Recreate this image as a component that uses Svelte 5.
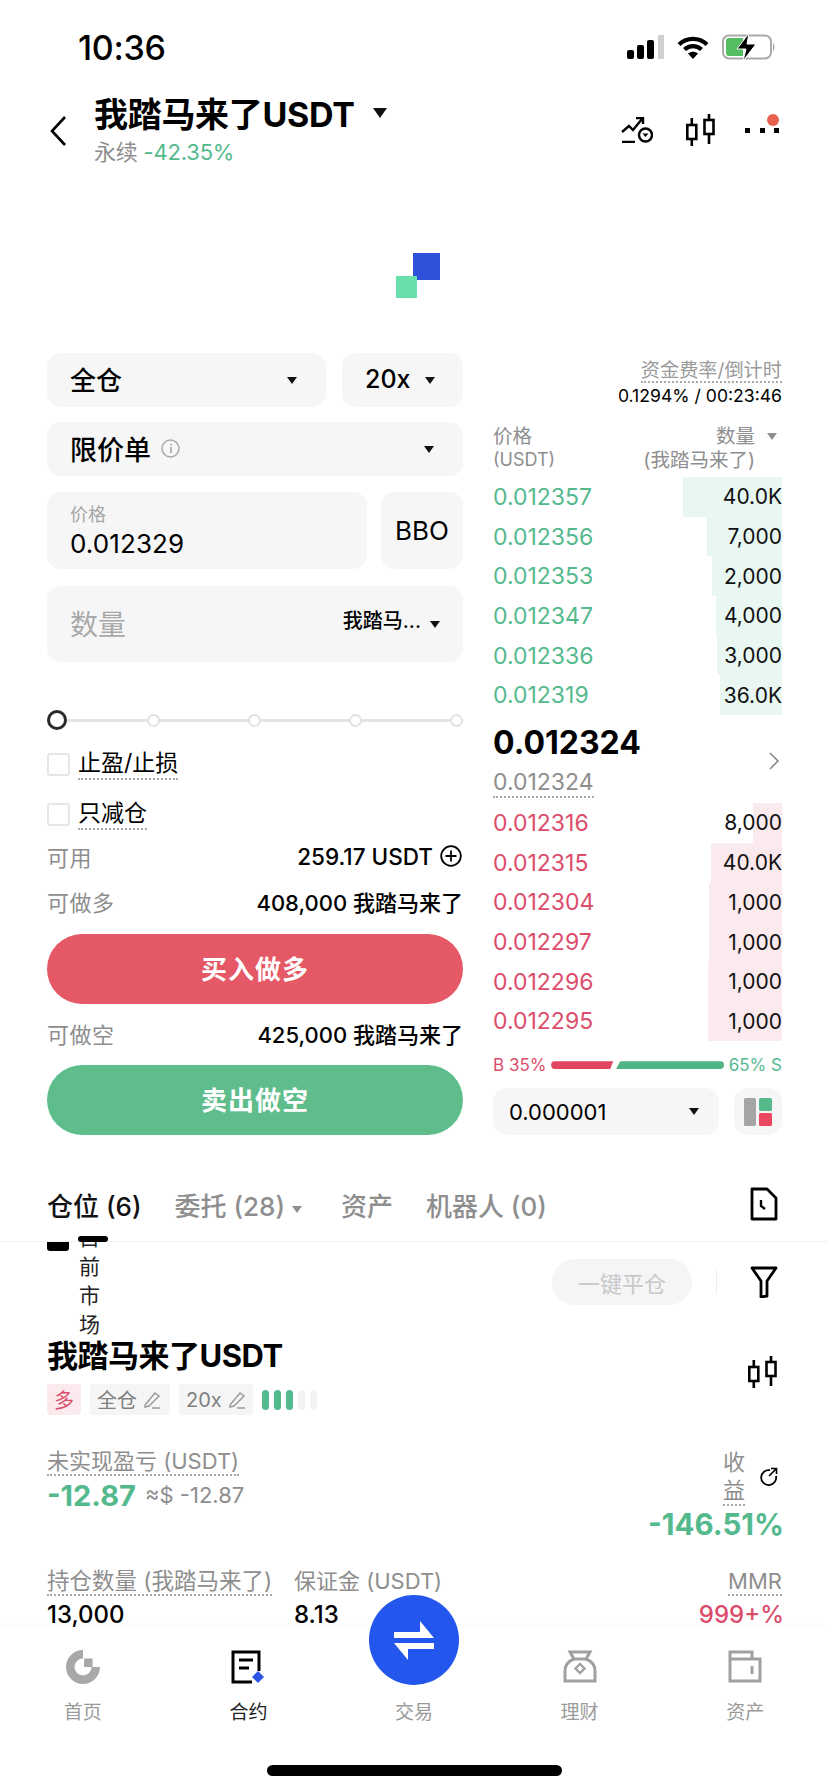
<script>
  const bids = [
    ['0.012357', '40.0K', 99], ['0.012356', '7,000', 75], ['0.012353', '2,000', 70],
    ['0.012347', '4,000', 66], ['0.012336', '3,000', 65], ['0.012319', '36.0K', 62]
  ];
  const asks = [
    ['0.012316', '8,000', 29], ['0.012315', '40.0K', 71], ['0.012304', '1,000', 73],
    ['0.012297', '1,000', 73], ['0.012296', '1,000', 74], ['0.012295', '1,000', 74]
  ];
</script>

<div class="page">
  <div class="main">
    <div class="status">
      <span class="time">10:36</span>
      <div class="status-icons">
        <svg width="37" height="24" viewBox="0 0 37 24"><rect x="0" y="15" width="7" height="9" rx="2" fill="#000"/><rect x="10" y="10" width="7" height="14" rx="2" fill="#000"/><rect x="20" y="5" width="7" height="19" rx="2" fill="#000"/><rect x="31" y="0" width="6" height="24" fill="#d0d0d0"/></svg>
        <svg width="32" height="23" viewBox="0 0 32 23"><path d="M2 8.500C10 1 22 1 30 8.500M7.500 13.500C12.500 9 19.500 9 24.500 13.500" fill="none" stroke="#000" stroke-width="4.200"/><path d="M11 17.500C14 15 18 15 21 17.500L16 23Z" fill="#000"/></svg>
        <svg width="54" height="28" viewBox="0 0 54 28"><rect x="1" y="2.500" width="48" height="23" rx="6" fill="none" stroke="#aaa" stroke-width="2"/><path d="M4 8a3 3 0 0 1 3-3h14v18H7a3 3 0 0 1-3-3Z" fill="#54bd62"/><path d="M27 0L15 16h9l-3 12L34 11h-9Z" fill="#000" stroke="#fff" stroke-width="1"/><path d="M51 10c2 1 2 7 0 8Z" fill="#aaa"/></svg>
      </div>
    </div>

    <div class="head">
      <svg class="back" width="17" height="32" viewBox="0 0 17 32"><path d="M15 2L2 16l13 14" fill="none" stroke="#000" stroke-width="2.600"/></svg>
      <div class="head-title">
        <div class="title-line"><span class="title">我踏马来了USDT</span><i class="tri tri-title"></i></div>
        <div class="sub"><span class="gray">永续</span> <span class="green">-42.35%</span></div>
      </div>
      <div class="head-icons">
        <svg class="ic-chart" width="32" height="26" viewBox="0 0 32 26"><path d="M1 25h13M1 15l7-6 4 4L21 2M15 1h7v6" fill="none" stroke="#000" stroke-width="2.400"/><circle cx="24.500" cy="18" r="6.500" fill="none" stroke="#000" stroke-width="2.400"/><path d="M21.500 16.500h6L24.500 20Z" fill="#000"/></svg>
        <svg width="29" height="32" viewBox="0 0 29 32"><g fill="none" stroke="#000" stroke-width="2.600"><rect x="1.300" y="11" width="9" height="14"/><rect x="18.500" y="6" width="9" height="14"/><path d="M5.800 4v7M5.800 25v7M23 0v6M23 20v10"/></g></svg>
        <div class="dots"><i></i><i></i><i></i><b></b></div>
      </div>
    </div>

    <div class="chart">
      <svg width="46" height="46" viewBox="0 0 46 46"><rect x="17" y="0" width="27" height="27" fill="#2f51db"/><rect x="0" y="23" width="21" height="22" fill="#68e0ab"/></svg>
    </div>

    <div class="trade">
      <div class="form">
        <div class="row-top">
          <div class="box box-margin"><span class="big">全仓</span><i class="tri"></i></div>
          <div class="box box-lev"><span class="big lev">20x</span><i class="tri"></i></div>
        </div>
        <div class="box box-type">
          <span class="big type-label">限价单 <svg width="19" height="19" viewBox="0 0 19 19"><circle cx="9.500" cy="9.500" r="8.500" fill="none" stroke="#aaa" stroke-width="1.500"/><path d="M10 8v6M10 5v1.500" stroke="#aaa" stroke-width="1.700"/></svg></span>
          <i class="tri"></i>
        </div>
        <div class="row-price">
          <div class="box box-price">
            <span class="field-label">价格</span>
            <span class="field-value">0.012329</span>
          </div>
          <div class="box box-bbo">BBO</div>
        </div>
        <div class="box box-qty">
          <span class="qty-ph">数量</span>
          <span class="qty-unit"><span class="qty-name">我踏马...</span><i class="tri"></i></span>
        </div>

        <div class="slider">
          <i class="knob"></i><i class="stop"></i><i class="stop"></i><i class="stop"></i><i class="stop"></i>
        </div>

        <label class="check first"><i class="cb"></i><span class="dotted">止盈/止损</span></label>
        <label class="check second"><i class="cb"></i><span class="dotted">只减仓</span></label>

        <div class="info info-avail"><span class="info-k">可用</span><span class="info-v usd">259.17 USDT <svg width="22" height="22" viewBox="0 0 22 22"><circle cx="11" cy="11" r="9.800" fill="none" stroke="#000" stroke-width="1.800"/><path d="M11 5.500v11M5.500 11h11" stroke="#000" stroke-width="1.800"/></svg></span></div>
        <div class="info info-long"><span class="info-k">可做多</span><span class="info-v">408,000 我踏马来了</span></div>
        <div class="btn buy">买入做多</div>
        <div class="info info-short"><span class="info-k">可做空</span><span class="info-v">425,000 我踏马来了</span></div>
        <div class="btn sell">卖出做空</div>
      </div>

      <div class="book">
        <div class="fund">
          <span class="fund-k dotted">资金费率/倒计时</span>
          <span class="fund-v">0.1294% / 00:23:46</span>
        </div>
        <div class="book-head">
          <div class="col-l"><span>价格</span><span class="latin">(USDT)</span></div>
          <div class="col-r"><span>数量</span><span>(我踏马来了)</span><i class="tri tri-gray"></i></div>
        </div>
        <div class="rows">
          {#each bids as r}
            <div class="lvl"><i class="bar bar-g" style="width:{r[2]}px"></i><span class="price green">{r[0]}</span><span class="qty">{r[1]}</span></div>
          {/each}
        </div>
        <div class="mid">
          <div class="mid-main"><div class="mid-price">0.012324</div><div class="mid-sub"><span class="dotted">0.012324</span></div></div>
          <svg width="12" height="20" viewBox="0 0 12 20"><path d="M2 2l8 8-8 8" fill="none" stroke="#888" stroke-width="1.600"/></svg>
        </div>
        <div class="rows">
          {#each asks as r}
            <div class="lvl"><i class="bar bar-r" style="width:{r[2]}px"></i><span class="price red">{r[0]}</span><span class="qty">{r[1]}</span></div>
          {/each}
        </div>
        <div class="ratio">
          <span class="red">B 35%</span>
          <i class="seg seg-r"></i><i class="seg seg-g"></i>
          <span class="green">65% S</span>
        </div>
        <div class="book-foot">
          <div class="box box-tick"><span>0.000001</span><i class="tri"></i></div>
          <div class="box box-layout">
            <svg width="28" height="28" viewBox="0 0 28 28"><rect x="0" y="0" width="12" height="28" rx="1.500" fill="#a5a5a5"/><rect x="15" y="0" width="13" height="13" rx="1.500" fill="#55b98a"/><rect x="15" y="15" width="13" height="13" rx="1.500" fill="#e8475f"/></svg>
          </div>
        </div>
      </div>
    </div>

    <div class="tabs">
      <span class="tab on">仓位 (6)</span>
      <span class="tab t2">委托 (28) <i class="tri tri-gray tri-inline"></i></span>
      <span class="tab t3">资产</span>
      <span class="tab t4">机器人 (0)</span>
      <svg class="tab-icon" width="28" height="34" viewBox="0 0 28 34"><path d="M2 2h15l9 9v21H2Z" fill="none" stroke="#000" stroke-width="2.800" stroke-linejoin="round"/><path d="M11 13v6l4 3" fill="none" stroke="#000" stroke-width="2.400"/></svg>
      <i class="black-pill"></i>
    </div>

    <div class="list">
      <div class="filter-row">
        <i class="black-cb"></i>
        <span class="vert">目前市场</span>
        <span class="pill">一键平仓</span>
        <i class="sep"></i>
        <svg width="28" height="32" viewBox="0 0 28 32"><path d="M2 2h24L17 15v15l-6 1V15Z" fill="none" stroke="#000" stroke-width="2.800" stroke-linejoin="round"/></svg>
      </div>

      <div class="pos-head">
        <div class="pos-left">
          <div class="pos-title">我踏马来了USDT</div>
          <div class="tags">
            <span class="tag tag-long">多</span>
            <span class="tag tag-cross">全仓 <svg width="18" height="18" viewBox="0 0 18 18"><path d="M2 14L12 2l4 3L6 15l-4 1ZM9 17h8" fill="none" stroke="#999" stroke-width="1.400"/></svg></span>
            <span class="tag">20x <svg width="18" height="18" viewBox="0 0 18 18"><path d="M2 14L12 2l4 3L6 15l-4 1ZM9 17h8" fill="none" stroke="#999" stroke-width="1.400"/></svg></span>
            <span class="lev-bars"><i class="lv on"></i><i class="lv on"></i><i class="lv on"></i><i class="lv"></i><i class="lv"></i></span>
          </div>
        </div>
        <svg class="pos-candle" width="29" height="32" viewBox="0 0 29 32"><g fill="none" stroke="#000" stroke-width="2.600"><rect x="1.300" y="11" width="9" height="14"/><rect x="18.500" y="6" width="9" height="14"/><path d="M5.800 4v7M5.800 25v7M23 0v6M23 20v10"/></g></svg>
      </div>

      <div class="metrics m1">
        <div>
          <div class="m-k"><span class="dotted">未实现盈亏 (USDT)</span></div>
          <div class="pnl"><span class="pnl-v green">-12.87</span> <span class="pnl-usd">≈$ -12.87</span></div>
        </div>
        <div class="m-right">
          <div class="roi-k"><span class="roi-text dotted">收益</span>
            <svg width="20" height="20" viewBox="0 0 20 20"><path d="M11 3.200A7.500 7.500 0 1 0 17 9" fill="none" stroke="#000" stroke-width="1.800"/><path d="M10 9l7-7M12 1.500h5.500V7" fill="none" stroke="#000" stroke-width="1.600"/></svg>
          </div>
          <div class="roi-v green">-146.51%</div>
        </div>
      </div>

      <div class="metrics m2">
        <div class="m-c1">
          <div class="m-k wide"><span class="dotted">持仓数量 (我踏马来了)</span></div>
          <div class="m-v">13,000</div>
        </div>
        <div class="m-c2">
          <div class="m-k">保证金 (USDT)</div>
          <div class="m-v">8.13</div>
        </div>
        <div class="m-right m-c3">
          <div class="m-k"><span class="dotted">MMR</span></div>
          <div class="m-v mmr red">999+%</div>
        </div>
      </div>
    </div>
  </div>

  <nav class="nav">
    <div class="nav-item">
      <svg width="34" height="34" viewBox="0 0 32 32"><path d="M16 0A16 16 0 1 0 32 16H24A8 8 0 1 1 16 8Z" fill="#a8a8a8"/><rect x="17" y="8" width="8" height="8" fill="#a8a8a8"/></svg>
      <span>首页</span>
    </div>
    <div class="nav-item active">
      <svg width="34" height="34" viewBox="0 0 34 34"><path d="M28 21V2H2v30h19" fill="none" stroke="#000" stroke-width="3"/><path d="M8 10h14M8 18h10" stroke="#000" stroke-width="3"/><path d="M27 21l6 6-6 6-6-6Z" fill="#2a55e5"/></svg>
      <span>合约</span>
    </div>
    <div class="nav-item trade-item">
      <div class="fab">
        <svg width="44" height="40" viewBox="0 0 44 40"><path d="M2 12h26V1l14 17H2ZM42 23H2l14 17V29h26Z" fill="#fff"/></svg>
      </div>
      <span>交易</span>
    </div>
    <div class="nav-item">
      <svg width="34" height="34" viewBox="0 0 34 34"><path d="M7 2h20l-4 7c5 2 9 6 9 12v10H2V21c0-6 4-10 9-12Z M11 9h12" fill="none" stroke="#a0a0a0" stroke-width="3"/><path d="M17 14l4.500 4.500L17 23l-4.500-4.500Z" fill="none" stroke="#a0a0a0" stroke-width="2.400"/></svg>
      <span>理财</span>
    </div>
    <div class="nav-item">
      <svg width="34" height="34" viewBox="0 0 34 34"><path d="M2 31V2h22v7h8v22ZM2 9h22" fill="none" stroke="#a0a0a0" stroke-width="3"/><path d="M24 16v8" stroke="#a0a0a0" stroke-width="3"/></svg>
      <span>资产</span>
    </div>
    <i class="home-bar"></i>
  </nav>
</div>

<style>
  :global(body) { margin: 0; background: #fff; }
  .page {
    width: 828px; height: 1792px; position: relative; overflow: hidden; background: #fff;
    display: flex; flex-direction: column;
    font-family: Inter, "Noto Sans CJK SC", sans-serif; color: #000;
  }
  .main { flex: 1; min-height: 0; overflow: hidden; }
  i { display: block; font-style: normal; }
  .green { color: #55b98e; }
  .red { color: #dc4d6c; }
  .gray { color: #8e8e8e; }
  .dotted { border-bottom: 2px dotted #aaa; }

  .tri { width: 0; height: 0; border-left: 5.500px solid transparent; border-right: 5.500px solid transparent; border-top: 7px solid #111; flex: none; }
  .tri-title { margin-left: 18px; border-left-width: 7px; border-right-width: 7px; border-top-width: 10px; }
  .tri-gray { border-top-color: #8e8e8e; }
  .tri-inline { display: inline-block; vertical-align: 3px; }

  .status { height: 94px; display: flex; align-items: center; justify-content: space-between; padding: 0 52px 0 78px; }
  .time { font-size: 34px; font-weight: 500; letter-spacing: -0.3px; }
  .status-icons { display: flex; align-items: center; gap: 13px; }

  .head { height: 80px; display: flex; align-items: center; padding: 0 49px 0 50px; }
  .back { margin-top: -6px; margin-right: 27px; flex: none; }
  .head-title { flex: 1; margin-top: -10px; }
  .title-line { display: flex; align-items: center; height: 42px; }
  .title { font-size: 34px; font-weight: 700; letter-spacing: -0.3px; }
  .sub { font-size: 22px; line-height: 30px; margin-top: 3px; letter-spacing: -0.2px; }
  .head-icons { display: flex; align-items: center; gap: 30px; margin-top: -8px; }
  .ic-chart { margin-right: 3px; }
  .dots { width: 34px; height: 32px; position: relative; display: flex; justify-content: space-between; align-items: center; }
  .dots i { width: 5px; height: 5px; background: #000; }
  .dots b { position: absolute; right: 0; top: 0; width: 12px; height: 12px; border-radius: 50%; background: #e8604f; }

  .chart { height: 179px; display: flex; align-items: center; padding-left: 396px; padding-top: 24px; box-sizing: border-box; }

  .trade { display: grid; grid-template-columns: 416px 289px; gap: 30px; padding-left: 47px; }
  .form { display: flex; flex-direction: column; }
  .box { background: #f6f6f6; border-radius: 14px; display: flex; align-items: center; box-sizing: border-box; }
  .big { font-size: 26px; font-weight: 500; margin-top: -3px; }
  .big.lev { font-size: 25px; }
  .row-top { display: flex; gap: 16px; }
  .box-margin { width: 279px; height: 54px; justify-content: space-between; padding: 0 29px 0 23px; }
  .box-lev { width: 121px; height: 54px; justify-content: space-between; padding: 0 28px 0 23px; }
  .box-type { height: 54px; margin-top: 15px; justify-content: space-between; padding: 0 29px 0 23px; }
  .type-label { display: flex; align-items: center; gap: 10px; font-size: 27px; margin-top: -1px; }
  .row-price { display: flex; gap: 14px; margin-top: 16px; }
  .box-price { width: 320px; height: 77px; flex-direction: column; align-items: flex-start; padding: 10px 23px 0; }
  .field-label { font-size: 18px; color: #a6a6a6; line-height: 26px; }
  .field-value { font-size: 26px; line-height: 32px; font-weight: 400; letter-spacing: 0.1px; }
  .box-bbo { width: 82px; height: 77px; justify-content: center; font-size: 26px; }
  .box-qty { height: 76px; margin-top: 17px; justify-content: space-between; padding: 0 23px 0 23px; }
  .qty-ph { font-size: 28px; color: #a9a9a9; margin-top: -2px; }
  .qty-unit { font-size: 20px; font-weight: 500; display: flex; align-items: center; gap: 9px; }
  .qty-name { margin-top: -9px; }

  .slider {
    height: 20px; margin-top: 48px; display: flex; justify-content: space-between; align-items: center;
    background: linear-gradient(#e4e4e4, #e4e4e4) center / 100% 3px no-repeat;
  }
  .knob { width: 20px; height: 20px; border-radius: 50%; background: #fff; border: 3px solid #2a2a2a; box-sizing: border-box; margin-right: -8px; }
  .stop { width: 13px; height: 13px; border-radius: 50%; background: #fff; border: 2px solid #e2e2e2; box-sizing: border-box; }

  .check { display: flex; align-items: center; gap: 8px; height: 30px; margin-top: 19px; font-size: 23px; }
  .check.second { margin-top: 20px; }
  .cb { width: 23px; height: 23px; border: 2px solid #e6e6e6; border-radius: 3px; box-sizing: border-box; }
  .check .dotted { line-height: 30px; }

  .info { display: flex; justify-content: space-between; align-items: center; height: 30px; }
  .info-avail { margin-top: 12px; }
  .info-long { margin-top: 15px; }
  .info-short { margin-top: 14px; }
  .info-k { font-size: 22px; color: #8e8e8e; letter-spacing: 0.5px; }
  .info-v { font-size: 22px; font-weight: 500; display: flex; align-items: center; gap: 7px; }
  .info-v.usd { font-size: 22.500px; }
  .info-v svg { margin-right: 1px; }

  .btn { height: 70px; border-radius: 35px; color: #fff; display: flex; align-items: center; justify-content: center; font-size: 26px; font-weight: 700; letter-spacing: 1px; box-sizing: border-box; padding-bottom: 3px; }
  .buy { background: #e55866; margin-top: 18px; }
  .sell { background: #5fbd8c; margin-top: 17px; }

  .book { display: flex; flex-direction: column; }
  .fund { display: flex; flex-direction: column; align-items: flex-end; margin-top: 6px; }
  .fund-k { font-size: 19.200px; line-height: 22px; color: #9a9a9a; }
  .fund-v { font-size: 17.600px; line-height: 24px; margin-top: 1px; }
  .book-head { display: flex; justify-content: space-between; margin-top: 16px; font-size: 19.500px; line-height: 24px; color: #8e8e8e; height: 53px; }
  .latin { font-size: 18px; }
  .col-l, .col-r { display: flex; flex-direction: column; }
  .col-r { align-items: flex-end; padding-right: 27px; position: relative; }
  .col-r .tri { position: absolute; right: 5px; top: 9px; }
  .rows { display: flex; flex-direction: column; }
  .lvl { height: 39.700px; position: relative; display: flex; justify-content: space-between; align-items: center; font-size: 21px; }
  .lvl span { position: relative; }
  .price { font-size: 23px; letter-spacing: 0; }
  .bar { position: absolute; right: 0; top: 0; bottom: 0; }
  .bar-g { background: #e8f7f1; }
  .bar-r { background: #fbeaed; }
  .qty { color: #111; }
  .mid { height: 88px; display: flex; justify-content: space-between; align-items: center; }
  .mid-price { font-size: 32px; font-weight: 700; line-height: 42px; margin-top: 0; }
  .mid-sub { font-size: 23px; color: #8e8e8e; line-height: 28px; margin-top: 4px; }
  .mid svg { margin-right: 2px; margin-top: 4px; }
  .ratio { display: flex; align-items: center; justify-content: space-between; height: 24px; margin-top: 12px; font-size: 17px; white-space: nowrap; }
  .seg { height: 8px; flex: none; }
  .seg-r { width: 62px; margin-left: 2px; background: #e1455f; border-radius: 4px 0 0 4px; clip-path: polygon(0 0, 100% 0, 95% 100%, 0 100%); }
  .seg-g { width: 108px; margin-right: 2px; background: #4fb585; border-radius: 0 4px 4px 0; clip-path: polygon(4% 0, 100% 0, 100% 100%, 0 100%); }
  .book-foot { display: flex; gap: 15px; margin-top: 11px; }
  .box-tick { width: 226px; height: 47px; justify-content: space-between; padding: 0 20px 0 16px; font-size: 22px; }
  .box-layout { width: 48px; height: 47px; justify-content: center; }

  .tabs { height: 107px; box-sizing: border-box; border-bottom: 1px solid #f2f2f2; display: flex; align-items: center; padding: 32px 50px 0 47px; font-size: 26px; color: #8e8e8e; position: relative; }
  .tab { white-space: nowrap; font-weight: 500; }
  .tab.on { color: #111; }
  .t2 { margin-left: 33px; }
  .t3 { margin-left: 39px; }
  .t4 { margin-left: 33px; }
  .tab-icon { margin-left: auto; }
  .black-pill { position: absolute; left: 78px; bottom: -1px; width: 30px; height: 6px; border-radius: 3px; background: #000; }

  .list { padding: 0 46px 0 47px; overflow: hidden; height: 387px; }
  .filter-row { height: 80px; display: flex; align-items: center; position: relative; }
  .black-cb { position: absolute; left: 0; top: 0; width: 22px; height: 9px; background: #000; border-radius: 0 0 3px 3px; }
  .vert { position: absolute; left: 32px; top: -19.500px; display: block; width: 22px; font-size: 21px; line-height: 29px; color: #222; }
  .pill { margin-left: auto; width: 140px; height: 46px; border-radius: 23px; background: #f5f5f6; color: #c8c8c8; font-size: 22px; display: flex; align-items: center; justify-content: center; }
  .sep { width: 1px; height: 24px; background: #ededed; margin: 0 33px 0 24px; }
  .filter-row svg { margin-right: 4px; }
  .pos-head { display: flex; justify-content: space-between; align-items: center; margin-top: 17px; }
  .pos-title { font-size: 31px; font-weight: 700; line-height: 34px; letter-spacing: -0.5px; }
  .pos-candle { margin-right: 5px; margin-top: -10px; }
  .tags { display: flex; align-items: center; gap: 9px; margin-top: 11px; }
  .tag { height: 31px; padding: 0 7px; background: #f5f5f6; border-radius: 3px; font-size: 20px; color: #808080; display: flex; align-items: center; gap: 6px; }
  .tag-cross { padding-right: 9px; }
  .tag-long { background: #fbeaed; color: #dc4d6c; padding: 0 7px; }
  .lev-bars { display: flex; gap: 5px; }
  .lv { width: 7px; height: 20px; border-radius: 3.500px; background: #f3f3f3; }
  .lv.on { background: #55b98e; }

  .metrics { display: flex; }
  .m1 { justify-content: space-between; margin-top: 33px; height: 120px; }
  .m-k { font-size: 22px; line-height: 26px; color: #8e8e8e; }
  .m-k.wide { font-size: 22.500px; }
  .pnl { display: flex; align-items: center; gap: 9px; margin-top: 3px; height: 36px; }
  .pnl-v { font-size: 29px; font-weight: 700; }
  .pnl-usd { font-size: 22px; color: #8e8e8e; }
  .m-right { display: flex; flex-direction: column; align-items: flex-end; margin-left: auto; }
  .roi-k { display: flex; align-items: center; gap: 14px; margin-right: 3px; }
  .roi-text { display: block; width: 22px; font-size: 22px; line-height: 28px; color: #8e8e8e; }
  .roi-v { font-size: 29.500px; font-weight: 700; line-height: 36px; margin-right: -2px; }
  .m-c1 { width: 247px; }
  .m-v { font-size: 24px; line-height: 32px; margin-top: 5px; font-weight: 500; }
  .m-v.mmr { margin-right: -2px; }

  .nav { height: 164px; flex: none; position: relative; background: #fff; box-shadow: 0 -1px 6px rgba(0,0,0,0.03); display: grid; grid-template-columns: repeat(5, 1fr); box-sizing: border-box; padding-top: 22px; align-items: start; }
  .nav-item { display: flex; flex-direction: column; align-items: center; gap: 13px; font-size: 19px; color: #9a9a9a; }
  .nav-item.active { color: #222; }
  .trade-item { padding-top: 47px; }
  .fab { position: absolute; left: 369px; top: -33px; width: 90px; height: 90px; border-radius: 50%; background: #2356ec; display: flex; align-items: center; justify-content: center; }
  .home-bar { position: absolute; left: 267px; bottom: 16px; width: 295px; height: 11px; border-radius: 6px; background: #000; }
</style>
